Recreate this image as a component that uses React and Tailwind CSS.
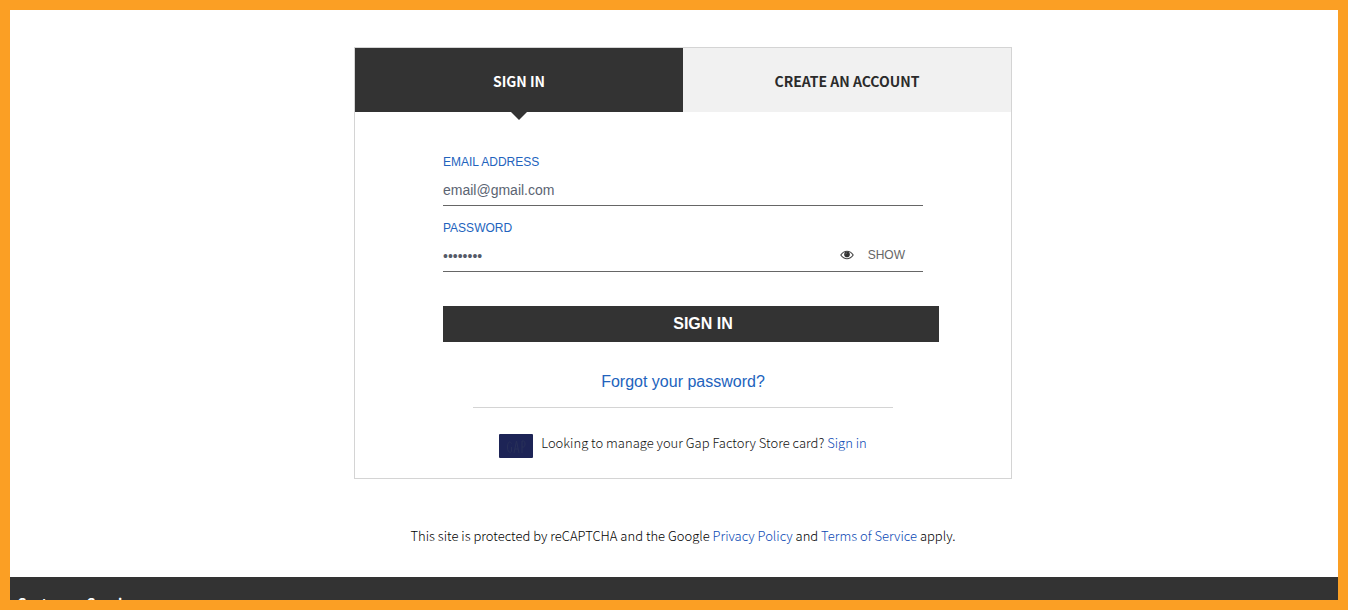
import { useState } from 'react';

function EyeIcon() {
  return (
    <svg viewBox="0 0 14 10" className="h-[10px] w-[14px] shrink-0" aria-hidden="true">
      <path d="M0.800 5C2.600 2.400 4.600 1.300 7 1.300S11.400 2.400 13.200 5C11.400 7.600 9.400 8.700 7 8.700S2.600 7.600 0.800 5Z" fill="none" stroke="#444" strokeWidth="1.100" />
      <circle cx="7" cy="4.400" r="2.800" fill="#333" />
      <path d="M5.600 4.300A1.500 1.500 0 0 1 7 2.900" fill="none" stroke="#999" strokeWidth="0.500" />
    </svg>
  );
}

function CardIcon() {
  return (
    <svg viewBox="0 0 34 24" className="h-6 w-[34px] shrink-0" aria-hidden="true">
      <rect width="34" height="24" rx="1" fill="#1d2456" />
      <g fill="none" stroke="#283059" strokeWidth="1">
        <path d="M12.500 9.500C11 6.500 8.500 8 8.500 13S11 19.500 12.500 17.500V13" />
        <path d="M15 19L17.500 7L20 19M16 15H19" />
        <path d="M23 19V7H24.500C26.500 7 26.500 13 24.500 13H23" />
      </g>
    </svg>
  );
}

function Tabs() {
  return (
    <div className="grid grid-cols-2 text-sm leading-5 font-bold">
      <button type="button" className="relative h-16 bg-[#333] pt-0.5 text-white">
        SIGN IN
        <span className="absolute top-full left-1/2 -translate-x-1/2 border-x-8 border-t-8 border-x-transparent border-t-[#333]" />
      </button>
      <button type="button" className="h-16 bg-[#f1f1f1] pt-0.5 text-[#2b2b2b]">CREATE AN ACCOUNT</button>
    </div>
  );
}

export default function App() {
  const [email, setEmail] = useState('email@gmail.com');
  const [password, setPassword] = useState('password');
  const [visible, setVisible] = useState(false);

  return (
    <div className="flex h-screen flex-col overflow-hidden border-10 border-[#fb9f24] bg-white font-['Noto_Sans_CJK_SC',sans-serif]">
      <main className="flex shrink-0 flex-col items-center pt-[37px] pb-8 pl-[18px]">
        <section className="w-full max-w-[658px] border border-[#d4d4d4]">
          <Tabs />
          <form className="px-[88px] pt-10 pb-5 font-['Liberation_Sans',sans-serif]" onSubmit={(e) => e.preventDefault()}>
            <div className="mb-3 flex flex-col border-b border-[#666]">
              <label htmlFor="email" className="text-xs leading-5 text-[#2263bd]">EMAIL ADDRESS</label>
              <input
                id="email"
                type="email"
                value={email}
                onChange={(e) => setEmail(e.target.value)}
                className="h-[33px] pt-0.5 text-sm text-[#5b6472] outline-none"
              />
            </div>

            <div className="flex flex-col border-b border-[#666]">
              <label htmlFor="password" className="text-xs leading-5 text-[#2263bd]">PASSWORD</label>
              <div className="flex h-[33px] items-center pr-[18px]">
                <input
                  id="password"
                  type={visible ? 'text' : 'password'}
                  value={password}
                  onChange={(e) => setPassword(e.target.value)}
                  className="h-full min-w-0 flex-1 pt-0.5 text-sm text-[#555a68] outline-none"
                />
                <button type="button" onClick={() => setVisible(!visible)} className="flex items-center gap-[14px] text-xs leading-4 text-[#666]">
                  <EyeIcon />
                  {visible ? 'HIDE' : 'SHOW'}
                </button>
              </div>
            </div>

            <button type="submit" className="mt-[34px] -mr-4 h-9 w-[calc(100%+16px)] bg-[#333] pl-6 text-base font-bold text-white">
              SIGN IN
            </button>

            <div className="mx-[30px] mt-7 border-b border-[#d4d4d4] pb-[13px] text-center">
              <a href="#forgot" className="text-base text-[#2263bd]">Forgot your password?</a>
            </div>

            <div className="mt-[26px] flex justify-center gap-2 font-['Noto_Sans_CJK_SC',sans-serif] text-[13px] leading-[18px] font-light text-[#111]">
              <CardIcon />
              <p>
                Looking to manage your Gap Factory Store card? <a href="#card" className="text-[#0a48b4]">Sign in</a>
              </p>
            </div>
          </form>
        </section>

        <p className="mt-12 text-[13px] leading-[18px] font-light text-black">
          This site is protected by reCAPTCHA and the Google{' '}
          <a href="#privacy" className="text-[#0a48b4]">Privacy Policy</a> and{' '}
          <a href="#terms" className="text-[#0a48b4]">Terms of Service</a> apply.
        </p>
      </main>

      <footer className="min-h-0 grow overflow-hidden bg-[#333] px-[7px] pt-4 text-white">
        <h2 className="text-sm leading-5 font-bold">Customer Service</h2>
      </footer>
    </div>
  );
}
